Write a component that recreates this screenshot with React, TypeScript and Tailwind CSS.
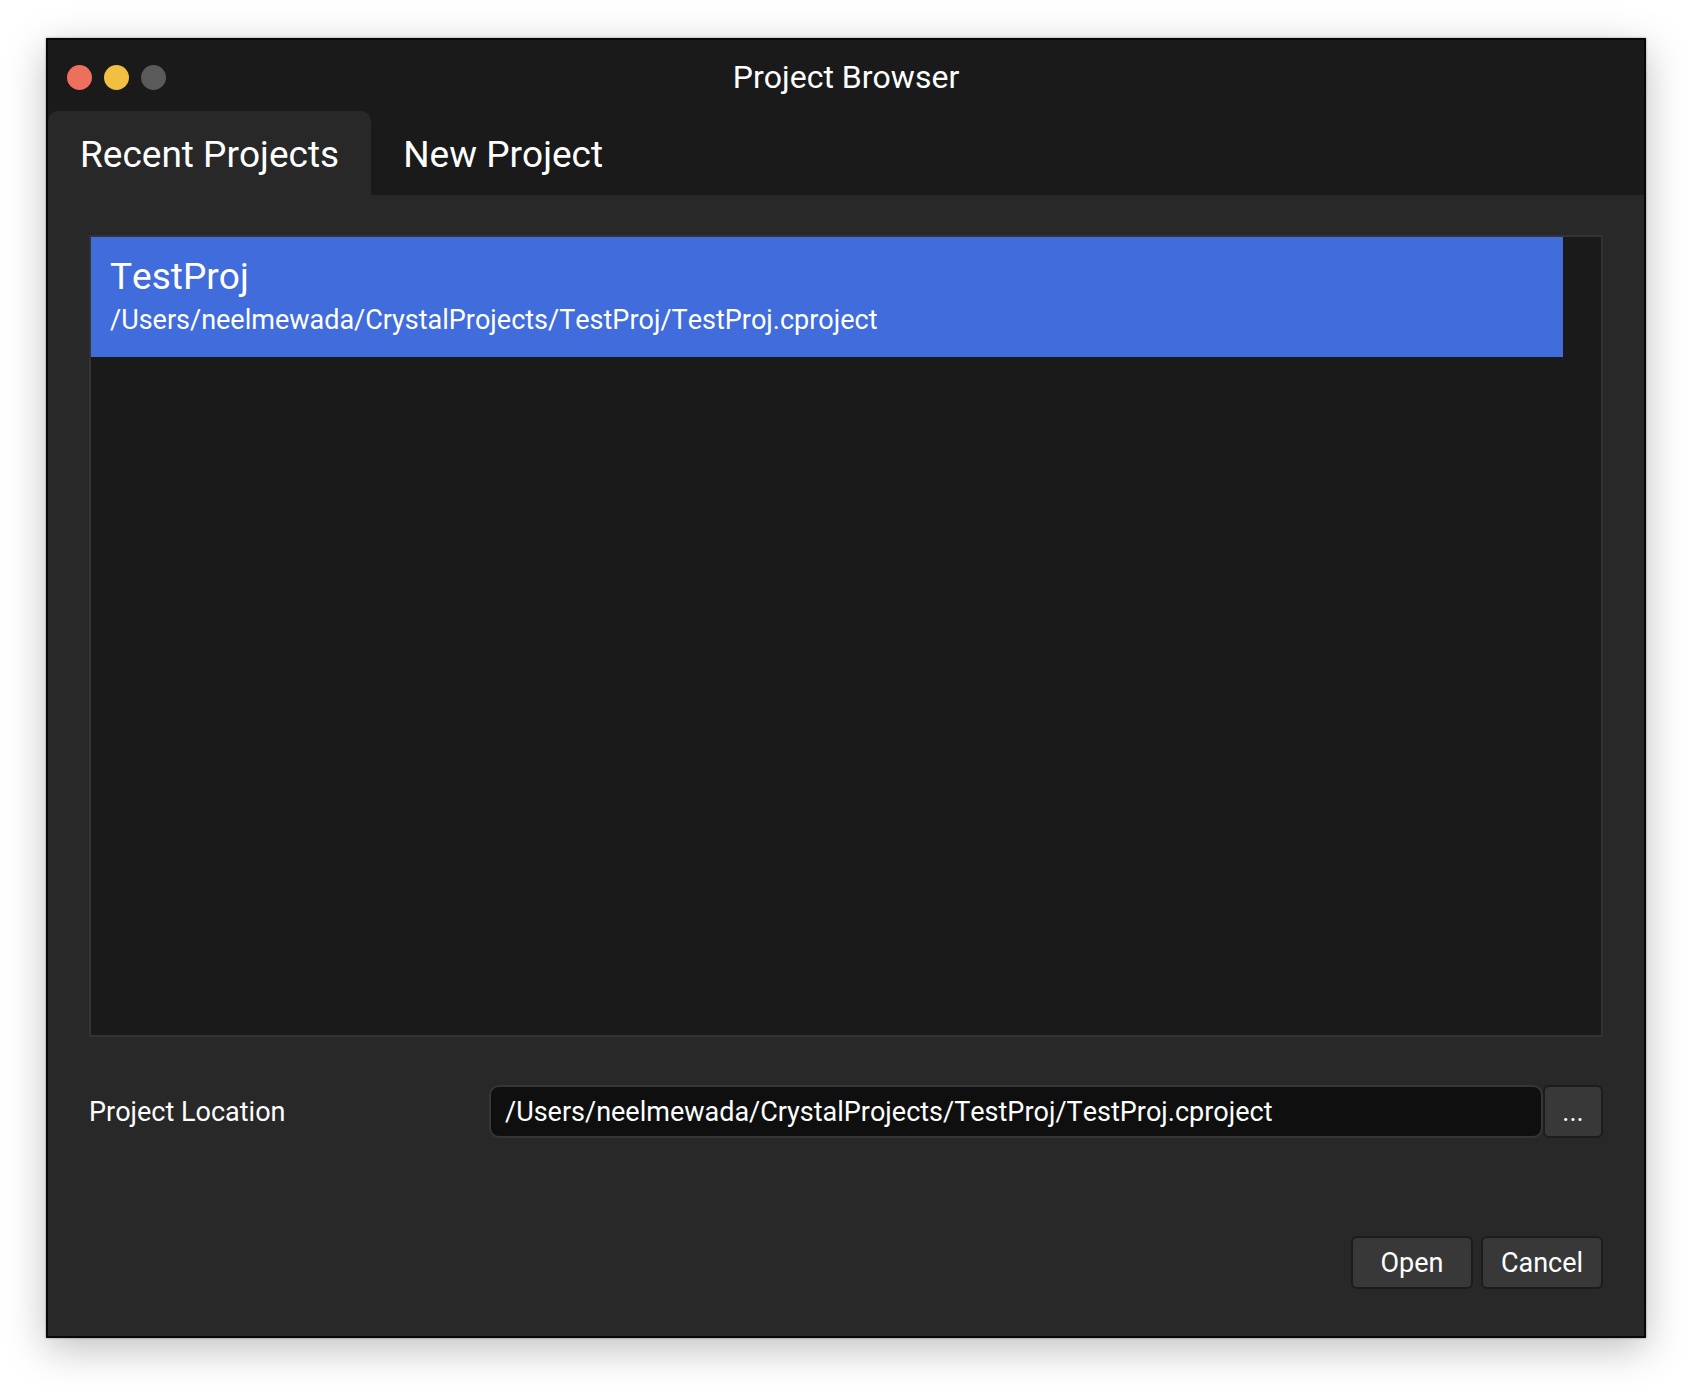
import { useState } from "react";

type Project = { name: string; path: string };

const projects: Project[] = [
  {
    name: "TestProj",
    path: "/Users/neelmewada/CrystalProjects/TestProj/TestProj.cproject",
  },
];

const tabs = ["Recent Projects", "New Project"];

function TitleBar() {
  return (
    <header className="grid h-[71px] shrink-0 grid-cols-[1fr_auto_1fr] items-center px-[19px] pt-[3px]">
      <div className="flex gap-3">
        <button type="button" aria-label="Close" className="size-[25px] rounded-full bg-[#ed6f5e]" />
        <button type="button" aria-label="Minimize" className="size-[25px] rounded-full bg-[#f1bf42]" />
        <button type="button" aria-label="Zoom" disabled className="size-[25px] rounded-full bg-[#5a5a5a]" />
      </div>
      <h1 className="text-[32px] leading-10">Project Browser</h1>
    </header>
  );
}

function PushButton({ children, className }: { children: string; className: string }) {
  return (
    <button
      type="button"
      className={`h-[53px] rounded-md border-2 border-[#1c1c1c] bg-[#383838] text-[27px] leading-8 ${className}`}
    >
      {children}
    </button>
  );
}

export default function App() {
  const [tab, setTab] = useState(0);
  const [selected, setSelected] = useState(0);
  const [location, setLocation] = useState(projects[0].path);

  return (
    <div className="flex min-h-screen flex-col bg-white px-[46px] pt-[38px] pb-[54px] font-['Roboto',sans-serif] text-white [font-kerning:none]">
      <main className="flex flex-1 flex-col border-2 border-[#080808] bg-[#1a1a1a] shadow-[0_0_2px_rgba(0,0,0,0.4),0_11px_38px_rgba(0,0,0,0.25)]">
        <TitleBar />
        <div role="tablist" className="flex h-[84px] shrink-0">
          {tabs.map((label, i) => (
            <button
              key={label}
              type="button"
              role="tab"
              aria-selected={tab === i}
              onClick={() => setTab(i)}
              className={`rounded-t-[10px] px-8 pt-[3px] text-[37px] leading-10 ${tab === i ? "bg-[#282828]" : ""}`}
            >
              {label}
            </button>
          ))}
        </div>

        <section className="flex flex-1 flex-col bg-[#282828] px-[41px] pt-10 pb-[47px]">
          <ul className="min-h-60 flex-1 border-2 border-[#333333] bg-[#1a1a1a] pr-[38px]">
            {projects.map((p, i) => (
              <li key={p.path}>
                <button
                  type="button"
                  onClick={() => {
                    setSelected(i);
                    setLocation(p.path);
                  }}
                  className={`flex h-[120px] w-full flex-col justify-center px-[19px] text-left ${selected === i ? "bg-[#406cdc]" : ""}`}
                >
                  <span className="text-[37px] leading-[46px]">{p.name}</span>
                  <span className="text-[27px] leading-10">{p.path}</span>
                </button>
              </li>
            ))}
          </ul>

          <div className="mt-12 flex items-center">
            <label htmlFor="location" className="w-[400px] shrink-0 text-[27px] leading-8">
              Project Location
            </label>
            <input
              id="location"
              type="text"
              value={location}
              onChange={(e) => setLocation(e.target.value)}
              className="h-[53px] min-w-0 flex-1 rounded-[10px] border-2 border-[#363636] bg-[#0f0f0f] px-3.5 text-[27px] leading-8 outline-none"
            />
            <PushButton className="w-[60px]">...</PushButton>
          </div>

          <div className="mt-[98px] flex justify-end gap-2">
            <PushButton className="w-[122px]">Open</PushButton>
            <PushButton className="w-[122px]">Cancel</PushButton>
          </div>
        </section>
      </main>
    </div>
  );
}
